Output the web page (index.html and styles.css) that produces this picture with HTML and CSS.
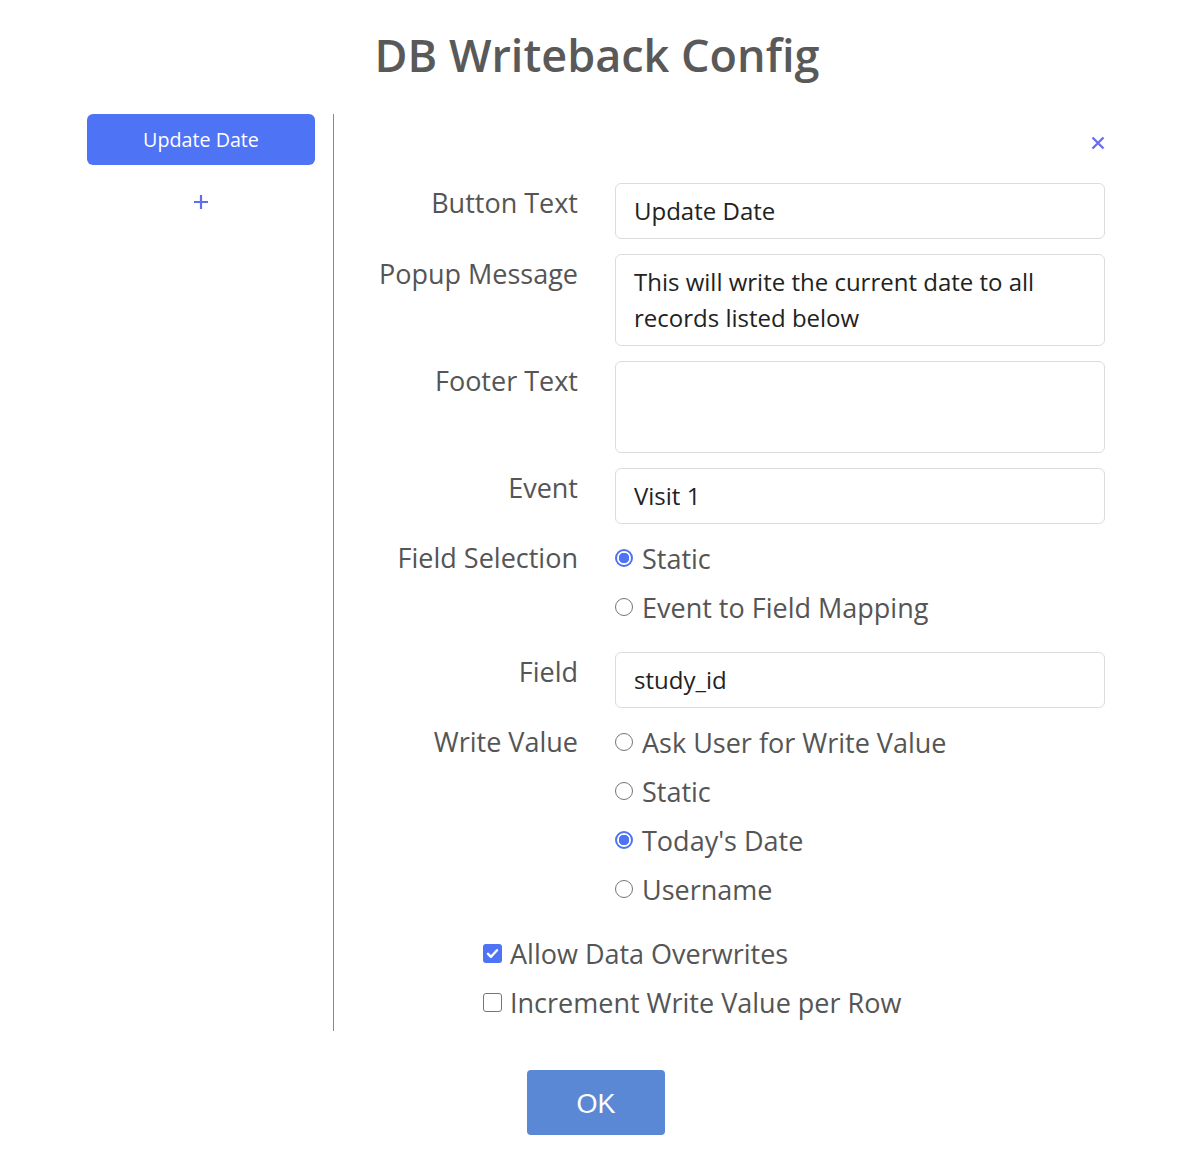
FILE: index.html
```html
<!DOCTYPE html>
<html>
<head>
<meta charset="utf-8">
<link rel="stylesheet" href="styles.css">
</head>
<body>
<h1 class="title">DB Writeback Config</h1>
<div class="layout">
  <aside class="sidebar">
    <button class="item-btn">Update Date</button>
    <button class="add-btn" aria-label="Add">
      <svg width="18" height="18" viewBox="0 0 18 18"><path d="M9 2v14M2 9h14" stroke="#5b6ff0" stroke-width="2.2" fill="none"/></svg>
    </button>
  </aside>
  <main class="content">
    <div class="content-head">
      <button class="close-btn" aria-label="Close">
        <svg width="14" height="14" viewBox="0 0 14 14"><path d="M1.5 1.5l11 11M12.5 1.5l-11 11" stroke="#6b6cf2" stroke-width="2.4" fill="none"/></svg>
      </button>
    </div>
    <div class="form">
      <label class="lbl">Button Text</label>
      <div class="field"><div class="input">Update Date</div></div>

      <label class="lbl">Popup Message</label>
      <div class="field"><div class="input area">This will write the current date to all records listed below</div></div>

      <label class="lbl">Footer Text</label>
      <div class="field"><div class="input area"></div></div>

      <label class="lbl">Event</label>
      <div class="field"><div class="input">Visit 1</div></div>

      <label class="lbl lbl-radio">Field Selection</label>
      <div class="field radios">
        <label class="opt"><input type="radio" name="fs" checked><span>Static</span></label>
        <label class="opt"><input type="radio" name="fs"><span>Event to Field Mapping</span></label>
      </div>

      <label class="lbl">Field</label>
      <div class="field"><div class="input">study_id</div></div>

      <label class="lbl lbl-radio">Write Value</label>
      <div class="field radios">
        <label class="opt"><input type="radio" name="wv"><span>Ask User for Write Value</span></label>
        <label class="opt"><input type="radio" name="wv"><span>Static</span></label>
        <label class="opt"><input type="radio" name="wv" checked><span>Today's Date</span></label>
        <label class="opt"><input type="radio" name="wv"><span>Username</span></label>
      </div>
    </div>
    <div class="checks">
      <label class="opt chk"><input type="checkbox" checked><span>Allow Data Overwrites</span></label>
      <label class="opt chk"><input type="checkbox"><span>Increment Write Value per Row</span></label>
    </div>
  </main>
</div>
<div class="footer">
  <button class="ok-btn">OK</button>
</div>
</body>
</html>
```
FILE: styles.css
```css
* { box-sizing: border-box; }
body {
  margin: 0;
  width: 1194px;
  background: #fff;
  font-family: "Open Sans", "Liberation Sans", sans-serif;
  color: #555;
}
.title {
  margin: 0;
  padding-top: 25px;
  height: 114px;
  line-height: 60px;
  text-align: center;
  font-size: 45px;
  font-weight: 600;
  color: #595959;
}
.layout {
  display: flex;
  align-items: stretch;
}
.sidebar {
  width: 333px;
  padding-left: 87px;
  padding-right: 18px;
  display: flex;
  flex-direction: column;
  align-items: center;
}
.item-btn {
  width: 228px;
  height: 51px;
  border: none;
  border-radius: 6px;
  background: #4f73f5;
  color: #fff;
  font-family: "Open Sans", sans-serif;
  font-size: 19.7px;
  padding: 0;
}
.add-btn {
  margin-top: 28px;
  border: none;
  background: none;
  padding: 0;
  width: 18px;
  height: 18px;
  display: flex;
}
.content {
  border-left: 1px solid #8a8a8a;
  width: 772px;
  padding-bottom: 10px;
}
.content-head {
  height: 69px;
  display: flex;
  justify-content: flex-end;
  align-items: flex-start;
  padding-top: 22px;
}
.close-btn {
  border: none;
  background: none;
  padding: 0;
  display: flex;
}
.form {
  display: grid;
  grid-template-columns: 244px 490px;
  column-gap: 37px;
  row-gap: 15px;
}
.lbl {
  text-align: right;
  font-size: 27px;
  line-height: 36px;
  padding-top: 2px;
  color: #555;
}
.lbl-radio { padding-top: 1px; }
.input {
  border: 1px solid #dcdcdc;
  border-radius: 6px;
  padding: 9px 18px;
  font-size: 24px;
  line-height: 36px;
  min-height: 56px;
  color: #222;
}
.input.area { min-height: 92px; }
.radios {
  display: flex;
  flex-direction: column;
}
.opt {
  display: flex;
  align-items: center;
  height: 38px;
  margin-bottom: 11px;
  font-size: 27px;
  color: #555;
}
.opt:last-child { margin-bottom: 0; }
.radios .opt { margin-bottom: 11px; }
.opt input[type="radio"] {
  appearance: none;
  -webkit-appearance: none;
  margin: 0 9px 0 0;
  width: 18px;
  height: 18px;
  border: 1.5px solid #767676;
  border-radius: 50%;
  background: #fff;
}
.opt input[type="radio"]:checked {
  border: 2px solid #4f73f5;
  background: radial-gradient(circle, #4f73f5 0 5px, #fff 5.5px);
}
.checks {
  padding-left: 149px;
  margin-top: 15px;
  display: flex;
  flex-direction: column;
}
.opt input[type="checkbox"] {
  appearance: none;
  -webkit-appearance: none;
  margin: 0 8px 0 0;
  width: 19px;
  height: 19px;
  border: 1.5px solid #767676;
  border-radius: 3px;
  background: #fff;
}
.opt input[type="checkbox"]:checked {
  border: none;
  background: #4f73f5 url("data:image/svg+xml;utf8,<svg xmlns='http://www.w3.org/2000/svg' viewBox='0 0 16 16'><path d='M3.2 8.3l3.2 3.2 6.4-7' stroke='white' stroke-width='2.6' fill='none' stroke-linecap='round' stroke-linejoin='round'/></svg>") center/15px no-repeat;
}
.footer {
  display: flex;
  justify-content: center;
  padding-top: 39px;
  padding-bottom: 37px;
}
.ok-btn {
  width: 138px;
  height: 65px;
  border: none;
  border-radius: 4px;
  background: #5a88d4;
  color: #fff;
  font-family: "Liberation Sans", Arial, sans-serif;
  font-size: 27px;
  padding: 3px 0 0 0;
  margin-right: 2px;
}
```
